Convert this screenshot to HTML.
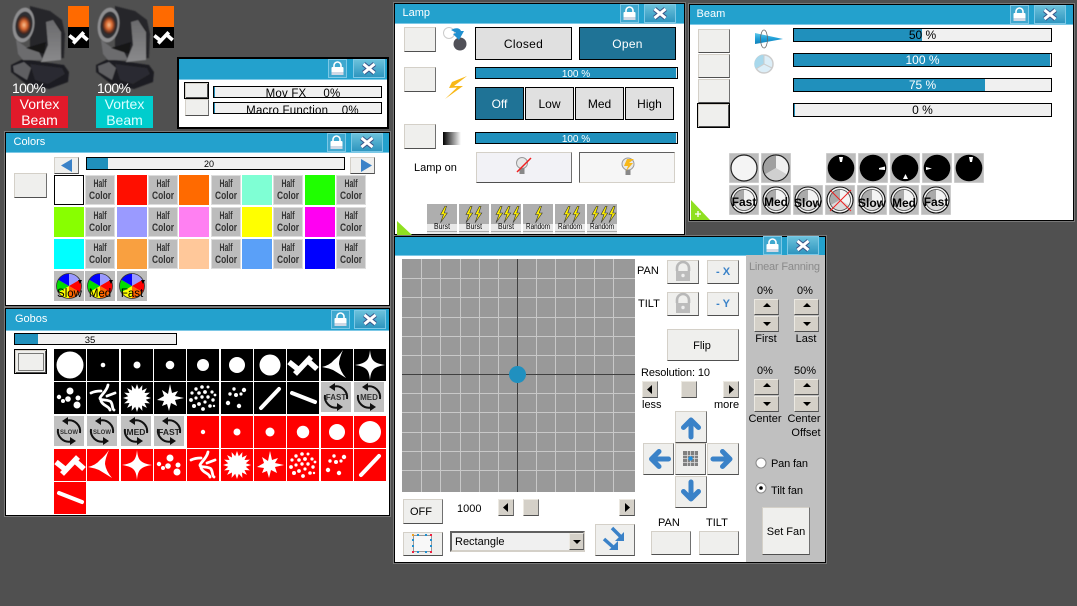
<!DOCTYPE html>
<html><head><meta charset="utf-8"><style>
html,body{margin:0;padding:0;background:#505050;width:1077px;height:606px;overflow:hidden}
div,i{position:absolute;display:block;box-sizing:border-box}
.w{background:#fff;border:1px solid #000;box-shadow:0 0 0 1px #787878}
.tb{background:#23a1cd;border-bottom:1px solid #7cc8e6;left:0;right:0;top:0}
.b{background:#efefed;border:1px solid;border-color:#d4d0c8 #707070 #505050 #d4d0c8}
.f{background:#efefed;border:1px solid #000;box-shadow:inset 1px 1px 0 #d4d0c8,inset -1px -1px 0 #505050}
.s{background:#d4d0c8;border:1px solid;border-color:#ece9e2 #707070 #505050 #ece9e2}
.p{background:#f0f0f0;border:1px solid #000}
.p i{left:0;top:0;bottom:0;background:#2090bc}
.g{background:#e0e0e0;border:1px solid #000}
.o{background:#1f7396;border:1px solid #000}
.c{width:30px;height:30px}
.h{width:30px;height:30px;background:#bcbcbc;border:1px solid #dcdcdc}
svg{position:absolute;left:0;top:0}
text{font-family:"Liberation Sans",sans-serif;font-size:11px;fill:#000}
.m{text-anchor:middle}
.wt{fill:#fff}
.hc{font-size:11px;font-weight:bold;fill:#333;text-anchor:middle}
.tt{fill:#fff;font-size:11px}
</style></head><body>

<!-- Mov FX window -->
<div class="w" style="left:177px;top:57px;width:212px;height:72px;border-width:2px;box-shadow:none"><div class="tb" style="height:21px"></div></div>
<i class="f" style="left:184px;top:82px;width:25px;height:17px"></i>
<i class="b" style="left:185px;top:99px;width:24px;height:17px"></i>
<div class="p" style="left:213px;top:86px;width:169px;height:12px"><i style="width:1px"></i></div>
<div class="p" style="left:213px;top:102px;width:169px;height:12px"><i style="width:1px"></i></div>

<!-- Colors window -->
<div class="w" style="left:5px;top:132px;width:385px;height:174px"><div class="tb" style="height:20px"></div></div>
<i class="b" style="left:14px;top:173px;width:33px;height:25px"></i>
<i class="b" style="left:54px;top:157px;width:25px;height:17px"></i>
<i class="b" style="left:350px;top:157px;width:25px;height:17px"></i>
<div class="p" style="left:86px;top:157px;width:259px;height:13px"><i style="width:21px"></i></div>
<i class="c" style="left:54px;top:175px;background:#fff;border:1px solid #000"></i>
<i class="c" style="left:117px;top:175px;background:#ff0f00"></i>
<i class="c" style="left:179px;top:175px;background:#ff6a00"></i>
<i class="c" style="left:242px;top:175px;background:#7fffd4"></i>
<i class="c" style="left:305px;top:175px;background:#1fff00"></i>
<i class="c" style="left:54px;top:207px;background:#88ff00"></i>
<i class="c" style="left:117px;top:207px;background:#9a9aff"></i>
<i class="c" style="left:179px;top:207px;background:#ff80f2"></i>
<i class="c" style="left:242px;top:207px;background:#ffff00"></i>
<i class="c" style="left:305px;top:207px;background:#ff00f2"></i>
<i class="c" style="left:54px;top:239px;background:#00ffff"></i>
<i class="c" style="left:117px;top:239px;background:#f9a040"></i>
<i class="c" style="left:179px;top:239px;background:#ffc89a"></i>
<i class="c" style="left:242px;top:239px;background:#5aa0f8"></i>
<i class="c" style="left:305px;top:239px;background:#0000ff"></i>
<i class="h" style="left:85px;top:175px"></i><i class="h" style="left:148px;top:175px"></i><i class="h" style="left:211px;top:175px"></i><i class="h" style="left:273px;top:175px"></i><i class="h" style="left:336px;top:175px"></i>
<i class="h" style="left:85px;top:207px"></i><i class="h" style="left:148px;top:207px"></i><i class="h" style="left:211px;top:207px"></i><i class="h" style="left:273px;top:207px"></i><i class="h" style="left:336px;top:207px"></i>
<i class="h" style="left:85px;top:239px"></i><i class="h" style="left:148px;top:239px"></i><i class="h" style="left:211px;top:239px"></i><i class="h" style="left:273px;top:239px"></i><i class="h" style="left:336px;top:239px"></i>

<!-- Gobos window -->
<div class="w" style="left:5px;top:308px;width:385px;height:208px"><div class="tb" style="height:22px"></div></div>
<div class="p" style="left:14px;top:333px;width:163px;height:12px"><i style="width:23px"></i></div>
<i class="f" style="left:14px;top:349px;width:33px;height:25px"></i>

<!-- Lamp window -->
<div class="w" style="left:394px;top:3px;width:291px;height:232px"><div class="tb" style="height:20px"></div></div>
<i class="b" style="left:404px;top:27px;width:32px;height:25px"></i>
<i class="b" style="left:404px;top:67px;width:32px;height:25px"></i>
<i class="b" style="left:404px;top:124px;width:32px;height:25px"></i>
<i class="g" style="left:475px;top:27px;width:97px;height:33px"></i>
<i class="o" style="left:579px;top:27px;width:97px;height:33px"></i>
<div class="p" style="left:475px;top:67px;width:203px;height:12px"><i style="right:1px"></i></div>
<i class="o" style="left:475px;top:87px;width:49px;height:33px"></i>
<i class="g" style="left:525px;top:87px;width:49px;height:33px"></i>
<i class="g" style="left:575px;top:87px;width:49px;height:33px"></i>
<i class="g" style="left:625px;top:87px;width:49px;height:33px"></i>
<div class="p" style="left:475px;top:132px;width:203px;height:12px"><i style="right:1px"></i></div>
<i class="b" style="left:476px;top:152px;width:96px;height:31px;background:#f2f2f6"></i>
<i class="b" style="left:579px;top:152px;width:96px;height:31px;background:#f6f6f6;border-color:#606060 #d4d0c8 #d4d0c8 #606060"></i>

<!-- Beam window -->
<div class="w" style="left:689px;top:4px;width:385px;height:217px"><div class="tb" style="height:20px"></div></div>
<i class="b" style="left:698px;top:29px;width:32px;height:24px"></i>
<i class="b" style="left:698px;top:54px;width:32px;height:24px"></i>
<i class="b" style="left:698px;top:79px;width:32px;height:24px"></i>
<i class="f" style="left:697px;top:103px;width:33px;height:25px"></i>
<div class="p" style="left:793px;top:28px;width:259px;height:14px"><i style="width:128px"></i></div>
<div class="p" style="left:793px;top:53px;width:259px;height:14px"><i style="right:1px"></i></div>
<div class="p" style="left:793px;top:78px;width:259px;height:14px"><i style="width:191px"></i></div>
<div class="p" style="left:793px;top:103px;width:259px;height:14px"><i style="width:1px"></i></div>

<!-- Main window -->
<div class="w" style="left:394px;top:236px;width:432px;height:327px"><div class="tb" style="height:19px"></div></div>
<div style="left:746px;top:255px;width:79px;height:307px;background:#c0c0c0"></div>
<i class="b" style="left:403px;top:499px;width:40px;height:25px"></i>
<i class="s" style="left:498px;top:499px;width:16px;height:17px"></i>
<i class="s" style="left:523px;top:499px;width:16px;height:17px"></i>
<i class="s" style="left:619px;top:499px;width:16px;height:17px"></i>
<i class="b" style="left:403px;top:532px;width:40px;height:24px"></i>
<div style="left:450px;top:531px;width:135px;height:21px;background:#f0f0f0;border:2px solid;border-color:#606060 #d4d0c8 #d4d0c8 #606060"></div>
<i class="s" style="left:569px;top:533px;width:15px;height:17px"></i>
<i class="b" style="left:595px;top:524px;width:40px;height:32px"></i>
<i class="b" style="left:667px;top:260px;width:32px;height:24px"></i>
<i class="b" style="left:707px;top:260px;width:32px;height:24px"></i>
<i class="b" style="left:667px;top:292px;width:32px;height:24px"></i>
<i class="b" style="left:707px;top:292px;width:32px;height:24px"></i>
<i class="b" style="left:667px;top:329px;width:72px;height:32px"></i>
<i class="s" style="left:642px;top:381px;width:16px;height:17px"></i>
<i class="s" style="left:681px;top:381px;width:16px;height:17px"></i>
<i class="s" style="left:723px;top:381px;width:16px;height:17px"></i>
<i class="b" style="left:675px;top:411px;width:32px;height:32px"></i>
<i class="b" style="left:643px;top:443px;width:31px;height:32px"></i>
<i class="b" style="left:675px;top:443px;width:31px;height:32px"></i>
<i class="b" style="left:707px;top:443px;width:32px;height:32px"></i>
<i class="b" style="left:675px;top:476px;width:32px;height:32px"></i>
<i class="b" style="left:651px;top:531px;width:40px;height:24px"></i>
<i class="b" style="left:699px;top:531px;width:40px;height:24px"></i>
<i class="s" style="left:754px;top:299px;width:25px;height:16px"></i><i class="s" style="left:754px;top:316px;width:25px;height:16px"></i>
<i class="s" style="left:794px;top:299px;width:25px;height:16px"></i><i class="s" style="left:794px;top:316px;width:25px;height:16px"></i>
<i class="s" style="left:754px;top:379px;width:25px;height:16px"></i><i class="s" style="left:754px;top:396px;width:25px;height:16px"></i>
<i class="s" style="left:794px;top:379px;width:25px;height:16px"></i><i class="s" style="left:794px;top:396px;width:25px;height:16px"></i>
<i class="b" style="left:762px;top:507px;width:48px;height:48px"></i>

<svg width="1077" height="606" viewBox="0 0 1077 606" xmlns="http://www.w3.org/2000/svg">
<defs>
<linearGradient id="xg" x1="0" y1="0" x2="0" y2="1"><stop offset="0" stop-color="#6cc2dc"/><stop offset="1" stop-color="#2c94be"/></linearGradient>
<linearGradient id="yk" x1="0" y1="0" x2="0" y2="1"><stop offset="0" stop-color="#6a6a6c"/><stop offset="1" stop-color="#8a8a8c"/></linearGradient>
<radialGradient id="glow" cx=".5" cy=".5" r=".5"><stop offset="0" stop-color="#f8c090"/><stop offset=".45" stop-color="#d86830"/><stop offset=".8" stop-color="#603020"/><stop offset="1" stop-color="#2a2422"/></radialGradient>
<filter id="sf"><feGaussianBlur stdDeviation=".4"/></filter>
<symbol id="tl" width="19" height="19" viewBox="0 0 19 19" overflow="visible"><rect x=".5" y=".5" width="18" height="18" fill="#3fa8cf" stroke="#7cc8e6"/><path d="M6 8V6.500a3.500 3.500 0 0 1 7 0V8" fill="none" stroke="#fff" stroke-width="1.600"/><rect x="3.500" y="8" width="12" height="8" rx="1" fill="#fff"/><rect x="3.500" y="13" width="12" height="3" fill="#d0d8e4"/></symbol>
<symbol id="tx" width="32" height="19" viewBox="0 0 32 19" overflow="visible"><rect x=".5" y=".5" width="31" height="18" fill="url(#xg)" stroke="#7cc8e6"/><path d="M10.500 5l11 9M21.500 5l-11 9" stroke="#3a5488" stroke-width="5"/><path d="M10.500 5l11 9M21.500 5l-11 9" stroke="#fff" stroke-width="3"/></symbol>
<symbol id="fx" width="80" height="90" viewBox="0 0 80 90"><g filter="url(#sf)">
<path d="M11 65L23 59 64 65 69 72 68 82 49 89 26 84 11 72z" fill="#1e1e21"/>
<path d="M13 66L24 62 31 68 27 80 14 72z" fill="#5e5e62"/>
<path d="M30 64L62 68 65 74 48 84 35 80z" fill="#2c2c30"/>
<path d="M30 6L50 11 62 20 65 34 64 58 44 60 30 48z" fill="#26262a"/>
<path d="M55 22L61 30 62 54 58 56z" fill="#1a1a1c"/>
<path d="M46 22L53 20 61 32 61 60 41 62 48 45z" fill="url(#yk)"/>
<path d="M16 40L26 47 39 52 43 60 23 60 18 54z" fill="#6c6c6e"/>
<path d="M26 48L46 42 44 54 38 52z" fill="#141416"/>
<ellipse cx="23.500" cy="25" rx="10.800" ry="17.500" fill="#8e8e90" transform="rotate(8 23.500 25)"/>
<ellipse cx="24" cy="25" rx="8.500" ry="13.500" fill="#2e2e30" transform="rotate(8 24 25)"/>
<ellipse cx="24" cy="25" rx="7" ry="9.500" fill="url(#glow)"/>
</g></symbol>
<symbol id="zz" viewBox="0 0 32 32" overflow="visible"><path d="M2 13L12 21M8 25L24 8M20 11l10 9" fill="none" stroke="#fff" stroke-width="5.500"/></symbol>
<symbol id="tri" viewBox="0 0 32 32"><path d="M1 18Q9 16 13 11 18 7 22 1 18 10 18 15 19 22 25 29 17 24 12 21 7 19 1 18z" fill="#fff"/></symbol>
<symbol id="st4" viewBox="0 0 32 32"><path d="M16 1C17 11 19 14 31 16 19 18 17 21 16 31 15 21 13 18 1 16 13 14 15 11 16 1z" fill="#fff"/></symbol>
<symbol id="dots1" viewBox="0 0 32 32"><g fill="#fff"><circle cx="16" cy="9" r="3.500"/><circle cx="14" cy="17" r="2.800"/><circle cx="5" cy="15" r="2.200"/><circle cx="9" cy="19" r="2"/><circle cx="24" cy="16" r="2.500"/><circle cx="23" cy="23" r="3.500"/></g></symbol>
<symbol id="swl" viewBox="0 0 32 32"><g fill="none" stroke="#fff" stroke-width="2.800" stroke-linecap="round"><path d="M4 11C8 9 11 9 14 9"/><path d="M21 3C20 9 14 13 13 16S22 17 24 20 25 27 27 28"/><path d="M14 19C16 24 22 24 23 28"/><path d="M20 14L28 11"/></g></symbol>
<symbol id="brst" viewBox="0 0 32 32"><polygon fill="#fff" points="30,16 24.800,17.800 28.900,21.400 23.500,21 25.900,25.900 21,23.500 21.400,28.900 17.800,24.800 16,30 14.200,24.800 10.600,28.900 11,23.500 6.100,25.900 8.500,21 3.100,21.400 7.200,17.800 2,16 7.200,14.200 3.100,10.600 8.500,11 6.100,6.100 11,8.500 10.600,3.100 14.200,7.200 16,2 17.800,7.200 21.400,3.100 21,8.500 25.900,6.100 23.500,11 28.900,10.600 24.800,14.200"/></symbol>
<symbol id="irr" viewBox="0 0 32 32"><polygon fill="#fff" points="30,16 21,18 23,24 17,21 15,29 13,22 8,24 10,19 3,18 10,14 8,8 14,12 16,2 18,11 24,9 21,14"/></symbol>
<symbol id="many" viewBox="0 0 32 32"><g fill="#fff"><circle cx="9" cy="7" r="1.700"/><circle cx="15" cy="5" r="1.800"/><circle cx="21" cy="5" r="1.500"/><circle cx="5" cy="11" r="1.600"/><circle cx="12" cy="11" r="1.800"/><circle cx="18" cy="10" r="1.900"/><circle cx="25" cy="10" r="1.600"/><circle cx="28" cy="13" r="1.400"/><circle cx="4" cy="18" r="1.900"/><circle cx="9" cy="16" r="1.600"/><circle cx="15" cy="15" r="1.700"/><circle cx="21" cy="15" r="1.700"/><circle cx="26" cy="18" r="1.700"/><circle cx="7" cy="24" r="2"/><circle cx="12" cy="22" r="1.900"/><circle cx="18" cy="20" r="1.600"/><circle cx="23" cy="24" r="1.800"/><circle cx="16" cy="27" r="1.900"/><circle cx="27" cy="24" r="1.200"/></g></symbol>
<symbol id="dots2" viewBox="0 0 32 32"><g fill="#fff"><circle cx="13" cy="7" r="1.700"/><circle cx="23" cy="8" r="2.200"/><circle cx="9" cy="12" r="1.700"/><circle cx="15" cy="13" r="2"/><circle cx="20" cy="12" r="1.600"/><circle cx="7" cy="21" r="2.200"/><circle cx="18" cy="24" r="2.200"/></g></symbol>
<symbol id="ln1" viewBox="0 0 32 32"><path d="M7 26L25 7" stroke="#fff" stroke-width="4" stroke-linecap="round"/></symbol>
<symbol id="ln2" viewBox="0 0 32 32"><path d="M5 11L28 20" stroke="#fff" stroke-width="4" stroke-linecap="round"/></symbol>
<symbol id="sp" width="30" height="30" viewBox="0 0 30 30"><rect width="30" height="30" fill="#c0c0c0"/><path d="M13 4.500A11 11 0 0 1 26 17M17 25.500A11 11 0 0 1 4 13" fill="none" stroke="#111" stroke-width="2"/><path d="M8 5l6-4v8zM22 25l-6-4v8z" fill="#111"/></symbol>
<symbol id="ar" viewBox="0 0 32 32"><path d="M16 26V9M8.500 16.500L16 9l7.500 7.500" fill="none" stroke="#3a82c8" stroke-width="5" stroke-linecap="round" stroke-linejoin="round"/></symbol>
<symbol id="wh" width="30" height="30" viewBox="0 0 30 30"><rect width="30" height="30" fill="#bcbcbc"/><path d="M15 15V2.500a12.500 12.500 0 0 1 10.800 6.250z" fill="#9a9aff"/><path d="M15 15L25.800 8.750a12.500 12.500 0 0 1 0 12.500z" fill="#f00"/><path d="M15 15L25.800 21.250A12.500 12.500 0 0 1 15 27.500z" fill="#f60"/><path d="M15 15V27.500A12.500 12.500 0 0 1 4.200 21.250z" fill="#ff0"/><path d="M15 15L4.200 21.250a12.500 12.500 0 0 1 0-12.500z" fill="#0d0"/><path d="M15 15L4.200 8.750A12.500 12.500 0 0 1 15 2.500z" fill="#00f"/><circle cx="15" cy="15" r="12.500" fill="none" stroke="#333" stroke-width=".8"/><path d="M24 9l4 0-2 4z" fill="#000"/></symbol>
<symbol id="cb" width="30" height="30" viewBox="0 0 30 30"><rect width="30" height="30" fill="#bcbcbc" stroke="#dcdcdc"/></symbol>
<symbol id="kb" width="30" height="30" viewBox="0 0 30 30"><rect width="30" height="30" fill="#bcbcbc" stroke="#dcdcdc"/><circle cx="15" cy="15" r="13.300" fill="#000"/></symbol>
<symbol id="sw" width="30" height="30" viewBox="0 0 30 30"><rect width="30" height="30" fill="#bcbcbc" stroke="#dcdcdc"/><circle cx="15" cy="15" r="13" fill="#f4f4f4" stroke="#111" stroke-width="1.100"/><path d="M15 15V4.500A10.500 10.500 0 0 0 6 20z" fill="#aaa"/><path d="M15 15L6 20A10.500 10.500 0 0 0 24 20z" fill="#dadada"/><circle cx="15" cy="15" r="10.500" fill="none" stroke="#444" stroke-width=".8"/></symbol>
<symbol id="bolt" viewBox="0 0 12 22"><path d="M8 0L2 11h4L2 22 11 9H7l3-9z" fill="#fff000" stroke="#333" stroke-width=".8"/></symbol>
<symbol id="bs" width="30" height="30" viewBox="0 0 30 30"><rect width="30" height="30" fill="#e8e8e8"/><rect width="30" height="20" fill="#aeaeae"/><rect y="27" width="30" height="1" fill="#aaa"/></symbol>
<symbol id="lkg" viewBox="0 0 32 24"><path d="M10 11V8a6 6 0 0 1 12 0v3" fill="none" stroke="#b8b8b8" stroke-width="2.600"/><rect x="9" y="11" width="14" height="10" fill="#bcbcbc"/><circle cx="16" cy="15.500" r="1.700" fill="#eee"/></symbol>
<symbol id="tri-g" width="20" height="20" viewBox="0 0 20 20"><path d="M1 0L20 20H1z" fill="#8fe020"/></symbol>
</defs>

<!-- Fixtures -->
<use href="#fx" x="0" y="0"/><use href="#fx" x="85" y="0"/>
<rect x="68" y="6" width="21" height="21" fill="#ff6a00"/><rect x="68" y="27" width="21" height="21" fill="#000"/>
<rect x="153" y="6" width="21" height="21" fill="#ff6a00"/><rect x="153" y="27" width="21" height="21" fill="#000"/>
<use href="#zz" x="68" y="27" width="21" height="21"/><use href="#zz" x="153" y="27" width="21" height="21"/>
<rect x="11" y="96" width="57" height="32" fill="#e21a2a"/><rect x="96" y="96" width="57" height="32" fill="#00cdcd"/>
<text class="wt" x="12" y="93" textLength="34" style="font-size:14px">100%</text><text class="wt" x="97" y="93" textLength="34" style="font-size:14px">100%</text>
<text class="wt m" x="39.500" y="109" style="font-size:14px">Vortex</text><text class="wt m" x="39.500" y="125" style="font-size:14px">Beam</text>
<text class="wt m" x="124.500" y="109" style="font-size:14px;fill:#d8ffff">Vortex</text><text class="wt m" x="124.500" y="125" style="font-size:14px;fill:#d8ffff">Beam</text>

<!-- Mov FX -->
<use href="#tl" x="328" y="59"/><use href="#tx" x="353" y="59"/>
<text class="m" x="303" y="97" style="font-size:11.500px;letter-spacing:.2px;white-space:pre" xml:space="preserve">Mov FX     0%</text>
<text class="m" x="302.500" y="114" style="font-size:11.500px;letter-spacing:.2px;white-space:pre" xml:space="preserve">Macro Function    0%</text>

<!-- Colors -->
<use href="#tl" x="327" y="133"/><use href="#tx" x="351" y="133"/>
<text class="tt" x="13.500" y="145">Colors</text>
<path d="M61 165.500l11-6.500v13zM372 165.500l-11-6.500v13z" fill="#3a82c8"/>
<text class="m" x="209" y="167" style="font-size:9px">20</text>
<g><text class="hc" x="100" y="187" textLength="13" lengthAdjust="spacingAndGlyphs">Half</text><text class="hc" x="100" y="199" textLength="22" lengthAdjust="spacingAndGlyphs">Color</text><text class="hc" x="163" y="187" textLength="13" lengthAdjust="spacingAndGlyphs">Half</text><text class="hc" x="163" y="199" textLength="22" lengthAdjust="spacingAndGlyphs">Color</text><text class="hc" x="226" y="187" textLength="13" lengthAdjust="spacingAndGlyphs">Half</text><text class="hc" x="226" y="199" textLength="22" lengthAdjust="spacingAndGlyphs">Color</text><text class="hc" x="288" y="187" textLength="13" lengthAdjust="spacingAndGlyphs">Half</text><text class="hc" x="288" y="199" textLength="22" lengthAdjust="spacingAndGlyphs">Color</text><text class="hc" x="351" y="187" textLength="13" lengthAdjust="spacingAndGlyphs">Half</text><text class="hc" x="351" y="199" textLength="22" lengthAdjust="spacingAndGlyphs">Color</text>
<text class="hc" x="100" y="219" textLength="13" lengthAdjust="spacingAndGlyphs">Half</text><text class="hc" x="100" y="231" textLength="22" lengthAdjust="spacingAndGlyphs">Color</text><text class="hc" x="163" y="219" textLength="13" lengthAdjust="spacingAndGlyphs">Half</text><text class="hc" x="163" y="231" textLength="22" lengthAdjust="spacingAndGlyphs">Color</text><text class="hc" x="226" y="219" textLength="13" lengthAdjust="spacingAndGlyphs">Half</text><text class="hc" x="226" y="231" textLength="22" lengthAdjust="spacingAndGlyphs">Color</text><text class="hc" x="288" y="219" textLength="13" lengthAdjust="spacingAndGlyphs">Half</text><text class="hc" x="288" y="231" textLength="22" lengthAdjust="spacingAndGlyphs">Color</text><text class="hc" x="351" y="219" textLength="13" lengthAdjust="spacingAndGlyphs">Half</text><text class="hc" x="351" y="231" textLength="22" lengthAdjust="spacingAndGlyphs">Color</text>
<text class="hc" x="100" y="251" textLength="13" lengthAdjust="spacingAndGlyphs">Half</text><text class="hc" x="100" y="263" textLength="22" lengthAdjust="spacingAndGlyphs">Color</text><text class="hc" x="163" y="251" textLength="13" lengthAdjust="spacingAndGlyphs">Half</text><text class="hc" x="163" y="263" textLength="22" lengthAdjust="spacingAndGlyphs">Color</text><text class="hc" x="226" y="251" textLength="13" lengthAdjust="spacingAndGlyphs">Half</text><text class="hc" x="226" y="263" textLength="22" lengthAdjust="spacingAndGlyphs">Color</text><text class="hc" x="288" y="251" textLength="13" lengthAdjust="spacingAndGlyphs">Half</text><text class="hc" x="288" y="263" textLength="22" lengthAdjust="spacingAndGlyphs">Color</text><text class="hc" x="351" y="251" textLength="13" lengthAdjust="spacingAndGlyphs">Half</text><text class="hc" x="351" y="263" textLength="22" lengthAdjust="spacingAndGlyphs">Color</text></g>
<use href="#wh" x="54" y="271"/><use href="#wh" x="85" y="271"/><use href="#wh" x="117" y="271"/>
<text class="m" x="69.500" y="297" style="font-size:11.500px">Slow</text><text class="m" x="100" y="297" style="font-size:11.500px">Med</text><text class="m" x="132" y="297" style="font-size:11.500px">Fast</text>

<!-- Gobos -->
<use href="#tl" x="331" y="310"/><use href="#tx" x="354" y="310"/>
<text class="tt" x="15" y="322">Gobos</text>
<text class="m" x="90" y="343" style="font-size:9.500px">35</text>
<rect x="18.500" y="353.500" width="25" height="17" fill="none" stroke="#000" stroke-dasharray="1 1"/>
<g fill="#000">
<rect x="54" y="349" width="32" height="32"/><rect x="87" y="349" width="32" height="32"/><rect x="121" y="349" width="32" height="32"/><rect x="154" y="349" width="32" height="32"/><rect x="187" y="349" width="32" height="32"/><rect x="221" y="349" width="32" height="32"/><rect x="254" y="349" width="32" height="32"/><rect x="287" y="349" width="32" height="32"/><rect x="321" y="349" width="32" height="32"/><rect x="354" y="349" width="32" height="32"/>
<rect x="54" y="382" width="32" height="32"/><rect x="87" y="382" width="32" height="32"/><rect x="121" y="382" width="32" height="32"/><rect x="154" y="382" width="32" height="32"/><rect x="187" y="382" width="32" height="32"/><rect x="221" y="382" width="32" height="32"/><rect x="254" y="382" width="32" height="32"/><rect x="287" y="382" width="32" height="32"/>
</g>
<g fill="#f00">
<rect x="187" y="416" width="32" height="32"/><rect x="221" y="416" width="32" height="32"/><rect x="254" y="416" width="32" height="32"/><rect x="287" y="416" width="32" height="32"/><rect x="321" y="416" width="32" height="32"/><rect x="354" y="416" width="32" height="32"/>
<rect x="54" y="449" width="32" height="32"/><rect x="87" y="449" width="32" height="32"/><rect x="121" y="449" width="32" height="32"/><rect x="154" y="449" width="32" height="32"/><rect x="187" y="449" width="32" height="32"/><rect x="221" y="449" width="32" height="32"/><rect x="254" y="449" width="32" height="32"/><rect x="287" y="449" width="32" height="32"/><rect x="321" y="449" width="32" height="32"/><rect x="354" y="449" width="32" height="32"/>
<rect x="54" y="482" width="32" height="32"/>
</g>
<g fill="#fff">
<circle cx="70" cy="365" r="13.500"/><circle cx="103" cy="365" r="2.300"/><circle cx="137" cy="365" r="3.500"/><circle cx="170" cy="365" r="4.300"/><circle cx="203" cy="365" r="6"/><circle cx="237" cy="365" r="8"/><circle cx="270" cy="365" r="10.500"/>
<circle cx="203" cy="432" r="2.200"/><circle cx="237" cy="432" r="3.500"/><circle cx="270" cy="432" r="4.500"/><circle cx="303" cy="432" r="6.200"/><circle cx="337" cy="432" r="8"/><circle cx="370" cy="432" r="11"/>
</g>
<use href="#zz" x="287" y="349" width="32" height="32"/><use href="#tri" x="321" y="349" width="32" height="32"/><use href="#st4" x="354" y="349" width="32" height="32"/>
<use href="#dots1" x="54" y="382" width="32" height="32"/><use href="#swl" x="87" y="382" width="32" height="32"/><use href="#brst" x="121" y="382" width="32" height="32"/><use href="#irr" x="154" y="382" width="32" height="32"/><use href="#many" x="187" y="382" width="32" height="32"/><use href="#dots2" x="221" y="382" width="32" height="32"/><use href="#ln1" x="254" y="382" width="32" height="32"/><use href="#ln2" x="287" y="382" width="32" height="32"/>
<use href="#zz" x="54" y="449" width="32" height="32"/><use href="#tri" x="87" y="449" width="32" height="32"/><use href="#st4" x="121" y="449" width="32" height="32"/><use href="#dots1" x="154" y="449" width="32" height="32"/><use href="#swl" x="187" y="449" width="32" height="32"/><use href="#brst" x="221" y="449" width="32" height="32"/><use href="#irr" x="254" y="449" width="32" height="32"/><use href="#many" x="287" y="449" width="32" height="32"/><use href="#dots2" x="321" y="449" width="32" height="32"/><use href="#ln1" x="354" y="449" width="32" height="32"/><use href="#ln2" x="54" y="482" width="32" height="32"/>
<use href="#sp" x="321" y="382"/><use href="#sp" x="354" y="382"/><use href="#sp" x="54" y="416"/><use href="#sp" x="87" y="416"/><use href="#sp" x="121" y="416"/><use href="#sp" x="154" y="416"/>
<text class="m" x="336" y="400" style="font-size:8px;font-weight:bold;fill:#333">FAST</text><text class="m" x="369" y="400" style="font-size:8px;font-weight:bold;fill:#333">MED</text><text class="m" x="69" y="434" style="font-size:6px;font-weight:bold;fill:#333">SLOW</text><text class="m" x="102" y="434" style="font-size:6px;font-weight:bold;fill:#333">SLOW</text><text class="m" x="136" y="435" style="font-size:8.500px;font-weight:bold;fill:#222">MED</text><text class="m" x="169" y="435" style="font-size:8.500px;font-weight:bold;fill:#222">FAST</text>

<!-- Lamp -->
<use href="#tl" x="620" y="4"/><use href="#tx" x="644" y="4"/>
<text class="tt" x="402.500" y="16">Lamp</text>
<circle cx="449" cy="33" r="5.500" fill="#fff" stroke="#ccc"/><circle cx="460" cy="44" r="6.500" fill="#505058"/><path d="M451 30c5-3 9-2 10 1l3 0-5 9-6-6 3-1c-1-1-3-2-5-3z" fill="#2090d0"/>
<text class="m" x="523.500" y="48" style="font-size:12px;letter-spacing:.3px">Closed</text><text class="m wt" x="627.500" y="48" style="font-size:12px;letter-spacing:.3px">Open</text>
<path d="M467 76L452 82 449 88 457 87.500 445 99 463 86 454 86z" fill="#f8b818"/>
<text class="m wt" x="576" y="77" style="font-size:10px">100 %</text>
<text class="m wt" x="499.500" y="108" style="font-size:12px">Off</text><text class="m" x="549.500" y="108" style="font-size:12px">Low</text><text class="m" x="599.500" y="108" style="font-size:12px">Med</text><text class="m" x="649.500" y="108" style="font-size:12px">High</text>
<defs><linearGradient id="bw"><stop offset="0" stop-color="#000"/><stop offset="1" stop-color="#fff"/></linearGradient></defs>
<rect x="443" y="132" width="18" height="13" fill="url(#bw)"/>
<text class="m wt" x="576" y="142" style="font-size:10px">100 %</text>
<text x="414" y="171" style="font-size:11px">Lamp on</text>
<circle cx="522" cy="163" r="5.500" fill="#e8e8e8" stroke="#999"/><rect x="519.500" y="168" width="5" height="6" fill="#888"/><path d="M517 172L531 158" stroke="#f02020" stroke-width="1.500"/>
<circle cx="628" cy="164" r="6" fill="#e8e8e8" stroke="#999"/><rect x="625.500" y="170" width="5" height="5" fill="#888"/><path d="M634 159l-7 0-3 7h4l-2 5 7-8h-4z" fill="#f8b818"/>
<use href="#bs" x="427" y="204"/><use href="#bs" x="459" y="204"/><use href="#bs" x="491" y="204"/><use href="#bs" x="523" y="204"/><use href="#bs" x="555" y="204"/><use href="#bs" x="587" y="204"/>
<use href="#bolt" x="439" y="206" width="9" height="17"/><use href="#bolt" x="464.500" y="206" width="9" height="17"/><use href="#bolt" x="473.500" y="206" width="9" height="17"/><use href="#bolt" x="494.500" y="206" width="9" height="17"/><use href="#bolt" x="502.500" y="206" width="9" height="17"/><use href="#bolt" x="511.500" y="206" width="9" height="17"/><use href="#bolt" x="534" y="206" width="9" height="17"/><use href="#bolt" x="562.500" y="206" width="9" height="17"/><use href="#bolt" x="571.500" y="206" width="9" height="17"/><use href="#bolt" x="590.500" y="206" width="9" height="17"/><use href="#bolt" x="599.500" y="206" width="9" height="17"/><use href="#bolt" x="607.500" y="206" width="9" height="17"/>
<text class="m" x="442" y="229" textLength="16" lengthAdjust="spacingAndGlyphs" style="font-size:8px">Burst</text><text class="m" x="474" y="229" textLength="16" lengthAdjust="spacingAndGlyphs" style="font-size:8px">Burst</text><text class="m" x="506" y="229" textLength="16" lengthAdjust="spacingAndGlyphs" style="font-size:8px">Burst</text><text class="m" x="538" y="229" textLength="24" lengthAdjust="spacingAndGlyphs" style="font-size:8px">Random</text><text class="m" x="570" y="229" textLength="24" lengthAdjust="spacingAndGlyphs" style="font-size:8px">Random</text><text class="m" x="602" y="229" textLength="24" lengthAdjust="spacingAndGlyphs" style="font-size:8px">Random</text>
<path d="M397 221L412 235H397z" fill="#8fe020"/>

<!-- Beam -->
<use href="#tl" x="1010" y="5"/><use href="#tx" x="1034" y="5"/>
<text class="tt" x="696.500" y="17">Beam</text>
<defs><linearGradient id="cone" x1="0" y1="0" x2="0" y2="1"><stop offset="0" stop-color="#60c8e8"/><stop offset=".5" stop-color="#20a0d8"/><stop offset="1" stop-color="#1080b8"/></linearGradient></defs>
<path d="M755 33L783 39 755 44z" fill="url(#cone)"/><ellipse cx="764" cy="39" rx="3.500" ry="9" fill="none" stroke="#666" stroke-width=".8"/>
<circle cx="764" cy="64" r="9" fill="#dceef8" stroke="#ccc" stroke-width="1.500"/><path d="M764 64V55a9 9 0 0 0-8 14z" fill="#a8d8ec"/><path d="M764 64L756 69M764 64V55M764 64l8 4" stroke="#ccc"/>
<text class="m" x="922.500" y="39" style="font-size:12px">50 %</text><text class="m wt" x="922.500" y="64" style="font-size:12px">100 %</text><text class="m wt" x="922.500" y="89" style="font-size:12px">75 %</text><text class="m" x="922.500" y="114" style="font-size:12px">0 %</text>
<use href="#cb" x="729" y="153"/><circle cx="744" cy="168" r="13" fill="#f4f4f4" stroke="#222" stroke-width="1.200"/>
<use href="#cb" x="761" y="153"/><circle cx="776" cy="168" r="13" fill="#f0f0f0" stroke="#222" stroke-width="1.200"/><path d="M776 168V155.600A12.400 12.400 0 0 0 765.300 174.200z" fill="#a0a0a0"/><path d="M776 168L765.300 174.200A12.400 12.400 0 0 0 786.700 174.200z" fill="#d0d0d0"/>
<use href="#kb" x="826" y="153"/><use href="#kb" x="858" y="153"/><use href="#kb" x="890" y="153"/><use href="#kb" x="922" y="153"/><use href="#kb" x="954" y="153"/>
<g fill="#fff"><path d="M839 157h4l-1 5h-2zM969 157h4l-1 5h-2zM879 168l6-1.500v3.500l-6-.5zM903 179l2.500-5 2.500 5zM926 167l6 1.500-6 1.500z"/></g>
<use href="#sw" x="729" y="185"/><use href="#sw" x="761" y="185"/><use href="#sw" x="793" y="185"/><use href="#sw" x="825" y="185"/><use href="#sw" x="857" y="185"/><use href="#sw" x="889" y="185"/><use href="#sw" x="921" y="185"/>
<path d="M830 190L851 211M851 190L830 211" stroke="#f02020" stroke-width="1"/>
<text class="m" x="744" y="206" style="font-weight:bold;font-size:12px">Fast</text><text class="m" x="776" y="206" style="font-weight:bold;font-size:12px">Med</text><text class="m" x="808" y="207" style="font-weight:bold;font-size:12px">Slow</text><text class="m" x="872" y="207" style="font-weight:bold;font-size:12px">Slow</text><text class="m" x="904" y="207" style="font-weight:bold;font-size:12px">Med</text><text class="m" x="936" y="206" style="font-weight:bold;font-size:12px">Fast</text>
<use href="#tri-g" x="690" y="200"/>
<path d="M695 214h6M698 211v6" stroke="#fff" stroke-width="1.300"/>

<!-- Main -->
<use href="#tl" x="763" y="236"/><use href="#tx" x="787" y="236"/>
<rect x="402" y="259" width="233" height="233" fill="#999"/>
<path d="M421.500 259v233M440.500 259v233M460.500 259v233M479.500 259v233M498.500 259v233M536.500 259v233M555.500 259v233M575.500 259v233M594.500 259v233M613.500 259v233M402 278.500h233M402 297.500h233M402 317.500h233M402 336.500h233M402 355.500h233M402 393.500h233M402 412.500h233M402 432.500h233M402 451.500h233M402 470.500h233" stroke="#c8c8c8" fill="none"/>
<path d="M517.500 259v233M402 374.500h233" stroke="#404040"/>
<circle cx="517.500" cy="374.500" r="8.500" fill="#2090bf"/>
<text class="m" x="421" y="515" style="font-size:11px">OFF</text>
<text x="457" y="512" style="font-size:11px">1000</text>
<path d="M503 507.500l5-4.500v9zM630 507.500l-5-4.500v9z" fill="#000"/>
<rect x="413.500" y="535.500" width="18" height="16" fill="#f8f8f8" stroke="#999"/>
<g fill="#2090d0"><rect x="417" y="534" width="2" height="2"/><rect x="425" y="534" width="2" height="2"/><rect x="412" y="539" width="2" height="2"/><rect x="430" y="539" width="2" height="2"/><rect x="412" y="545" width="2" height="2"/><rect x="430" y="545" width="2" height="2"/><rect x="417" y="551" width="2" height="2"/><rect x="425" y="551" width="2" height="2"/></g>
<rect x="412" y="534" width="2" height="2" fill="#f0a020"/><rect x="430" y="534" width="2" height="2" fill="#f02040"/><rect x="412" y="551" width="2" height="2" fill="#f02040"/><rect x="430" y="551" width="2" height="2" fill="#f02040"/>
<text x="455" y="545" style="font-size:11px">Rectangle</text>
<path d="M573 540h8l-4 4z" fill="#000"/>
<path d="M612 528L621 537M604 539L613 547" stroke="#3a82c8" stroke-width="3.500"/><path d="M624 532V541H615zM618 541V550H609z" fill="#3a82c8"/>
<text x="637" y="274" style="font-size:11px">PAN</text><text x="638" y="307" style="font-size:11px">TILT</text>
<use href="#lkg" x="667" y="260" width="32" height="24"/><use href="#lkg" x="667" y="292" width="32" height="24"/>
<text class="m" x="723" y="275" style="font-size:11px;font-weight:bold;fill:#3a82c8">- X</text><text class="m" x="723" y="307" style="font-size:11px;font-weight:bold;fill:#3a82c8">- Y</text>
<text class="m" x="702" y="349" style="font-size:11px">Flip</text>
<text x="641" y="376" style="font-size:11px" textLength="69">Resolution: 10</text>
<path d="M647 389.500l5-4.500v9zM734 389.500l-5-4.500v9z" fill="#000"/>
<text x="642" y="408" style="font-size:11px">less</text><text x="714" y="408" style="font-size:11px">more</text>
<use href="#ar" x="675" y="411" width="32" height="32"/>
<use href="#ar" x="-16" y="-16" width="32" height="32" transform="translate(658.500 459) rotate(-90)"/>
<use href="#ar" x="-16" y="-16" width="32" height="32" transform="translate(723 459) rotate(90)"/>
<use href="#ar" x="-16" y="-16" width="32" height="32" transform="translate(691 492) rotate(180)"/>
<g fill="#808080"><rect x="683" y="451" width="15" height="15"/></g>
<path d="M683 455.500h15M683 458.500h15M683 462.500h15M687.500 451v15M690.500 451v15M694.500 451v15" stroke="#ddd" stroke-width=".8"/>
<circle cx="690.500" cy="458.500" r="2.200" fill="#2090e0"/>
<text x="658" y="526" style="font-size:11px">PAN</text><text x="706" y="526" style="font-size:11px">TILT</text>
<text x="749" y="270" textLength="71" style="font-size:11px;fill:#8a8a8a">Linear Fanning</text>
<text class="m" x="765" y="294">0%</text><text class="m" x="805" y="294">0%</text>
<text class="m" x="765" y="374">0%</text><text class="m" x="805" y="374">50%</text>
<path d="M767 303l-4 4h8zM807 303l-4 4h8zM767 383l-4 4h8zM807 383l-4 4h8zM763 322h8l-4 4zM803 322h8l-4 4zM763 402h8l-4 4zM803 402h8l-4 4z" fill="#000"/>
<text class="m" x="766" y="342">First</text><text class="m" x="806" y="342">Last</text>
<text class="m" x="765" y="422">Center</text><text class="m" x="804" y="422">Center</text><text class="m" x="806" y="436">Offset</text>
<circle cx="761" cy="463" r="5" fill="#fff" stroke="#888"/><circle cx="761" cy="488" r="5" fill="#fff" stroke="#888"/><circle cx="761" cy="488" r="1.800" fill="#000"/>
<text x="771" y="467" style="font-size:11px" textLength="37">Pan fan</text><text x="771" y="494" style="font-size:11px" textLength="32">Tilt fan</text>
<text class="m" x="786" y="535" style="font-size:11px">Set Fan</text>
</svg>
</body></html>
